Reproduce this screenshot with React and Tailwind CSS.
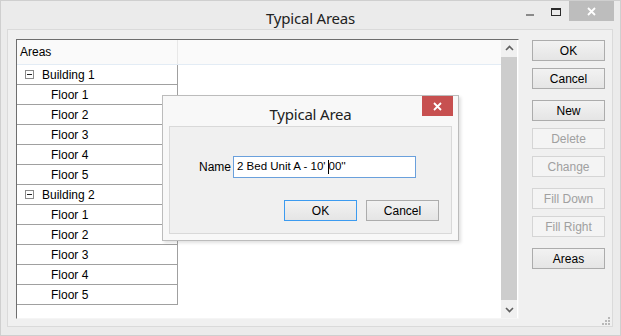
import React from "react";

const groups = [
  { name: "Building 1", floors: ["Floor 1", "Floor 2", "Floor 3", "Floor 4", "Floor 5"] },
  { name: "Building 2", floors: ["Floor 1", "Floor 2", "Floor 3", "Floor 4", "Floor 5"] },
];

const sideButtons = [
  { label: "OK", gap: "mt-[1px]" },
  { label: "Cancel", gap: "mt-[7px]" },
  { label: "New", gap: "mt-[11px]" },
  { label: "Delete", gap: "mt-[7px]", disabled: true },
  { label: "Change", gap: "mt-[7px]", disabled: true },
  { label: "Fill Down", gap: "mt-[11px]", disabled: true },
  { label: "Fill Right", gap: "mt-[7px]", disabled: true },
  { label: "Areas", gap: "mt-[11px]" },
];

function WinButton({ label, disabled, focused, className = "" }) {
  const border = disabled
    ? "border-[#d5d5d5] text-[#a0a0a0] bg-[#f4f4f4]"
    : focused
    ? "border-[#3c9bf0] text-black bg-gradient-to-b from-[#f2f2f2] to-[#e5e5e5]"
    : "border-[#acacac] text-black bg-gradient-to-b from-[#f2f2f2] to-[#e5e5e5]";
  return (
    <div
      className={`w-[73px] h-[21px] border flex items-center justify-center text-[12px] ${border} ${className}`}
    >
      {label}
    </div>
  );
}

function TreeRow({ children, indent }) {
  return (
    <div className="flex h-[20px]">
      <div
        className={`w-[161px] border-r border-b border-[#a0a0a0] flex items-center text-[12px] text-black ${indent}`}
      >
        {children}
      </div>
    </div>
  );
}

function Chevron({ up }) {
  return (
    <svg width="9" height="6" viewBox="0 0 9 6">
      <path
        d={up ? "M1 5 L4.5 1.5 L8 5" : "M1 1 L4.5 4.5 L8 1"}
        fill="none"
        stroke="#606060"
        strokeWidth="1.6"
      />
    </svg>
  );
}

export default function App() {
  return (
    <div
      className="w-[621px] h-[336px] bg-[#ebebeb] border border-[#cfcfcf] flex flex-col relative overflow-hidden"
      style={{ fontFamily: '"Liberation Sans", Arial, sans-serif' }}
    >
      {/* title bar */}
      <div className="h-[28px] flex items-start relative">
        <div
          className="flex-1 text-center text-[15px] text-[#222] pt-[6px] tracking-[-0.2px]"
          style={{ fontFamily: '"Noto Sans", "Open Sans", sans-serif' }}
        >
          Typical Areas
        </div>
        <div className="absolute right-[6px] top-0 flex items-start">
          <div className="w-[26px] h-[20px] flex items-center justify-center">
            <div className="w-[8px] h-[2px] bg-[#8a8a8a] mt-[8px]" />
          </div>
          <div className="w-[26px] h-[20px] flex items-center justify-center">
            <div className="w-[10px] h-[8px] border border-t-2 border-[#2b2b2b] mt-[2px]" />
          </div>
          <div className="w-[45px] h-[20px] bg-[#bdbdbd] flex items-center justify-center">
            <svg width="9" height="9" viewBox="0 0 9 9">
              <path d="M1 1 L8 8 M8 1 L1 8" stroke="#fff" strokeWidth="1.8" />
            </svg>
          </div>
        </div>
      </div>

      {/* client area */}
      <div className="ml-[6px] mr-[7px] mb-[8px] flex-1 bg-[#f0f0f0] border border-[#dadada] relative flex pl-[8px] pt-[9px]">
        {/* grid */}
        <div className="w-[503px] h-[280px] bg-white border-t border-l border-[#6e6e6e] border-r border-b border-r-[#f5f5f5] border-b-[#f5f5f5] flex">
          <div className="flex-1 flex flex-col">
            <div className="h-[25px] bg-[#fafafa] border-b border-[#e3ecf5] flex">
              <div className="w-[161px] border-r border-[#e8e8e8] flex items-center pl-[3px] text-[12px] text-black">
                Areas
              </div>
            </div>
            {groups.map((g) => (
              <React.Fragment key={g.name}>
                <TreeRow indent="pl-[8px]">
                  <div className="w-[9px] h-[9px] border border-[#8a8a8a] flex items-center justify-center mr-[8px]">
                    <div className="w-[5px] h-[1px] bg-[#222]" />
                  </div>
                  {g.name}
                </TreeRow>
                {g.floors.map((f) => (
                  <TreeRow key={g.name + f} indent="pl-[34px]">
                    {f}
                  </TreeRow>
                ))}
              </React.Fragment>
            ))}
          </div>
          {/* scrollbar */}
          <div className="w-[16px] mr-[1px] bg-[#f0f0f0] flex flex-col">
            <div className="h-[16px] flex items-center justify-center">
              <Chevron up />
            </div>
            <div className="flex-1 bg-[#cdcdcd] my-[1px]" />
            <div className="h-[17px] flex items-center justify-center">
              <Chevron />
            </div>
          </div>
        </div>

        {/* side buttons */}
        <div className="ml-[13px] flex flex-col">
          {sideButtons.map((b) => (
            <WinButton key={b.label} label={b.label} disabled={b.disabled} className={b.gap} />
          ))}
        </div>

        {/* resize grip */}
        <svg className="absolute right-[2px] bottom-[1px]" width="8" height="8" viewBox="0 0 8 8">
          <rect x="6" y="0" width="2" height="2" fill="#b8b8b8" />
          <rect x="3" y="3" width="2" height="2" fill="#b8b8b8" />
          <rect x="6" y="3" width="2" height="2" fill="#b8b8b8" />
          <rect x="0" y="6" width="2" height="2" fill="#b8b8b8" />
          <rect x="3" y="6" width="2" height="2" fill="#b8b8b8" />
          <rect x="6" y="6" width="2" height="2" fill="#b8b8b8" />
        </svg>
      </div>

      {/* dialog */}
      <div className="absolute left-[161px] top-[94px] w-[297px] h-[146px] bg-[#f8f8f8] border border-[#bcbcbc] shadow-[2px_2px_3px_rgba(0,0,0,0.12)] flex flex-col px-[6px] pb-[6px]">
        <div className="h-[30px] flex items-start relative">
          <div
            className="flex-1 text-center text-[15px] text-[#222] pt-[7px] tracking-[-0.2px]"
            style={{ fontFamily: '"Noto Sans", "Open Sans", sans-serif' }}
          >
            Typical Area
          </div>
          <div className="absolute right-[-1px] top-0 w-[31px] h-[20px] bg-[#c75050] flex items-center justify-center">
            <svg width="9" height="9" viewBox="0 0 9 9">
              <path d="M1 1 L8 8 M8 1 L1 8" stroke="#fff" strokeWidth="1.8" />
            </svg>
          </div>
        </div>
        <div className="flex-1 bg-[#f0f0f0] border border-[#d9d9d9] flex flex-col pt-[29px] pl-[29px]">
          <div className="flex items-center">
            <span className="text-[12px] text-black mr-[2px]">Name</span>
            <div className="w-[183px] h-[22px] bg-white border border-[#6aa0dc] flex items-center pl-[3px] text-[11.5px] text-black">
              2 Bed Unit A - 10'
              <span className="inline-block w-[1px] h-[14px] bg-black ml-[2px]" />
              00''
            </div>
          </div>
          <div className="flex mt-[22px] ml-[85px] gap-[9px]">
            <WinButton label="OK" focused />
            <WinButton label="Cancel" />
          </div>
        </div>
      </div>
    </div>
  );
}
